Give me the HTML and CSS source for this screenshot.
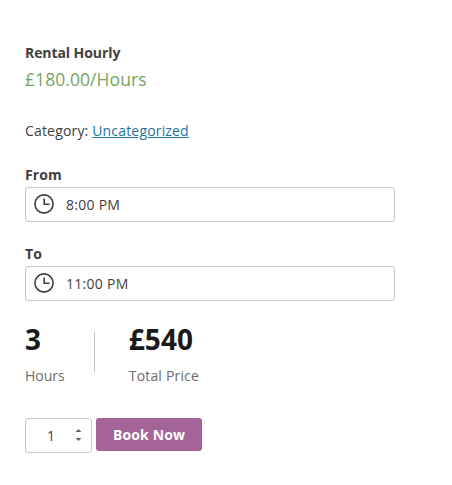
FILE: index.html
```html
<!DOCTYPE html>
<html lang="en">
<head>
<meta charset="utf-8">
<title>Rental Hourly</title>
<link rel="stylesheet" href="styles.css">
</head>
<body>
<main class="product">
  <h1 class="title">Rental Hourly</h1>
  <p class="price">£180.00/Hours</p>
  <p class="meta">Category: <a href="#">Uncategorized</a></p>
  <div class="field">
    <span class="label">From</span>
    <div class="time">
      <svg class="clock" viewBox="0 0 20 20"><circle cx="10" cy="10" r="9.1"/><path d="M10.2 4.4V10.2H15.6"/></svg>
      <span>8:00 PM</span>
    </div>
  </div>
  <div class="field">
    <span class="label">To</span>
    <div class="time">
      <svg class="clock" viewBox="0 0 20 20"><circle cx="10" cy="10" r="9.1"/><path d="M10.2 4.4V10.2H15.6"/></svg>
      <span>11:00 PM</span>
    </div>
  </div>
  <div class="summary">
    <div class="stat"><strong>3</strong><span>Hours</span></div>
    <div class="divider"></div>
    <div class="stat"><strong>£540</strong><span>Total Price</span></div>
  </div>
  <div class="actions">
    <div class="quantity">
      <span>1</span>
      <svg class="spinner" viewBox="0 0 7 14"><path d="M0.5 4L3.5 1L6.5 4ZM0.5 10H6.5L3.5 13Z"/></svg>
    </div>
    <button class="book" type="button">Book Now</button>
  </div>
</main>
</body>
</html>
```

FILE: styles.css
```css
* {
  box-sizing: border-box;
}

body {
  margin: 0;
  background: #fff;
  color: #404040;
  font: 14px/20px "Open Sans", sans-serif;
}

.product {
  width: 395px;
  padding: 43px 0 0 25px;
}

.title,
.price,
.meta {
  margin: 0;
}

.title {
  font-size: 14px;
  line-height: 20px;
  font-weight: 700;
  letter-spacing: -0.08px;
}

.price {
  margin-top: 4px;
  color: #77a464;
  font-size: 17.5px;
  line-height: 24px;
  letter-spacing: 0.07px;
}

.meta {
  margin-top: 30px;
  letter-spacing: 0.17px;
}

.meta a {
  color: #1e73a0;
}

.field {
  margin-top: 24px;
}

.field + .field {
  margin-top: 22px;
}

.label {
  display: block;
  height: 22px;
  font-weight: 700;
  letter-spacing: 0.1px;
}

.time {
  display: flex;
  align-items: center;
  gap: 12px;
  height: 35px;
  padding: 0 8px;
  border: 1px solid #c7c7c7;
  border-radius: 3px;
  letter-spacing: 0.27px;
}

.clock {
  width: 20px;
  height: 20px;
  margin-bottom: 1px;
  fill: none;
  stroke: #404040;
  stroke-width: 1.6;
}

.summary {
  display: flex;
  margin-top: 21px;
}

.stat {
  display: flex;
  flex-direction: column;
  color: #6d6d6d;
  letter-spacing: 0.18px;
}

.stat:first-child {
  letter-spacing: 0;
}

.stat strong {
  height: 44px;
  color: #1a1a1a;
  font-size: 28px;
  line-height: 34px;
  letter-spacing: 0.1px;
}

.divider {
  width: 1px;
  height: 40px;
  margin: 10px 34px 0 29px;
  background: #c7c7c7;
}

.actions {
  display: flex;
  align-items: flex-start;
  gap: 4px;
  margin-top: 32px;
}

.quantity {
  display: flex;
  align-items: center;
  justify-content: space-between;
  width: 67px;
  height: 35px;
  padding: 0 9px 0 21px;
  border: 1px solid #c7c7c7;
  border-radius: 3px;
}

.spinner {
  width: 7px;
  height: 14px;
  margin-bottom: 1px;
  fill: #666;
}

.book {
  width: 106px;
  height: 33px;
  padding: 0;
  border: 0;
  border-radius: 3px;
  background: #a46497;
  color: #fff;
  font: 700 14px/20px "Open Sans", sans-serif;
  letter-spacing: 0.13px;
}
```
